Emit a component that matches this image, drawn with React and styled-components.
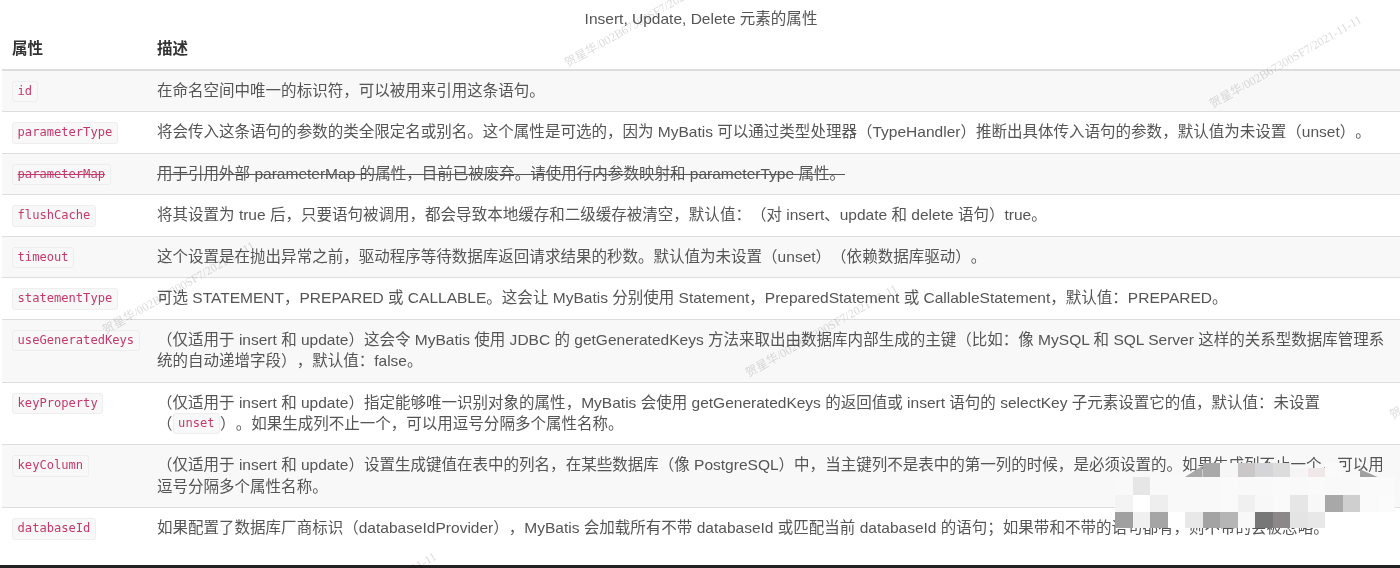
import React from 'react';
import styled, { createGlobalStyle } from 'styled-components';

const GlobalStyle = createGlobalStyle`
    html, body {
        margin: 0;
        padding: 0;
        background: #fff;
        overflow: hidden;
    }
`;

const SANS = '"Liberation Sans", "Noto Sans CJK SC", sans-serif';

const Page = styled.div`
    position: relative;
    display: flex;
    flex-direction: column;
    width: 1400px;
    height: 568px;
    overflow: hidden;
    background: #fff;
    color: #555;
    font-family: ${SANS};
    font-size: 15.52px;
    text-spacing-trim: space-all;
    filter: blur(0.45px);
`;

const Main = styled.main`
    flex: 1;
    padding: 0 0 0 2px;
`;

const Caption = styled.div`
    height: 31px;
    padding-top: 8.5px;
    box-sizing: border-box;
    text-align: center;
    line-height: 20px;
    color: #555;
`;

const Table = styled.table`
    width: 1398px;
    border-collapse: collapse;
    table-layout: fixed;
`;

const HeadCell = styled.th`
    height: 31px;
    padding: 0 10px 7px;
    text-align: left;
    font-weight: 700;
    color: #333;
    border-bottom: 2px solid #ddd;
`;

const Row = styled.tr`
    background: ${(p) => (p.$striped ? '#f8f8f8' : '#fff')};
    border-bottom: ${(p) => (p.$last ? 'none' : '1px solid #ddd')};
`;

const NameCell = styled.td`
    padding: 10px 10px 9.2px;
    vertical-align: top;
    line-height: 21.3px;
`;

const DescCell = styled.td`
    padding: 9px 10px 10.2px;
    vertical-align: top;
    line-height: 21.3px;
    text-decoration: ${(p) => (p.$deprecated ? 'line-through' : 'none')};
`;

const NoBreak = styled.span`
    white-space: nowrap;
`;

const Code = styled.code`
    display: inline-block;
    box-sizing: border-box;
    vertical-align: top;
    height: 21.3px;
    padding: 0 4.6px;
    line-height: 19.3px;
    font-family: "DejaVu Sans Mono", monospace;
    font-size: 12.1px;
    color: #c7386a;
    background: #f8f8f8;
    border: 1px solid #eee;
    border-radius: 3px;
    text-decoration: ${(p) => (p.$deprecated ? 'line-through' : 'none')};
`;

const BottomBar = styled.div`
    height: 3px;
    background: #222;
`;

const Watermark = styled.span`
    position: absolute;
    left: ${(p) => p.$x}px;
    top: ${(p) => p.$y}px;
    transform: translate(-50%, -50%) rotate(-30deg);
    font-family: "Liberation Serif", "Noto Sans CJK SC", serif;
    font-size: 12px;
    white-space: nowrap;
    color: rgba(0, 0, 0, 0.15);
    pointer-events: none;
`;

const Mosaic = styled.div`
    position: absolute;
    left: 1115px;
    top: 463px;
    display: grid;
    grid-template-columns: repeat(16, 17.5px);
    grid-template-rows: 14px 17.5px 17.5px 16px;
    filter: blur(0.5px);
`;

const Block = styled.i`
    display: block;
    background: ${(p) => p.$c};
    clip-path: ${(p) => p.$clip || 'none'};
`;

const T = 'transparent';
const MOSAIC = [
    [T, T, T, T, '#a8a8a8', '#a9a9a9', '#f6f6f6', '#c9c7c7', '#d5d5d8', '#dcdcdc', '#f5f5f5', '#f0e8e8', '#fafafa', T, '#a0a0a0', T],
    ['#f9f9f9', '#e6e6e6', '#f9f9f9', '#f9f9f9', '#f9f9f9', '#f9f9f9', '#fafafa', '#f9f9f9', '#f9f9f9', '#fafafa', '#f9f9f9', '#fafafa', '#f9f9f9', '#f9f9f9', '#fafafa', '#fafafa'],
    ['#f3f3f3', '#ffffff', '#eeeeee', '#f9f9f9', '#f9f9f9', '#f9f9f9', '#fafafa', '#f0f0f0', '#f8f8f8', '#fafafa', '#e6e6e6', '#f8f8f8', '#a8a8a8', '#cfcfcf', '#fafafa', '#fbfbfb'],
    ['#a0a0a0', '#f0f0f0', '#a5a5a5', '#ffffff', '#e8e8e8', '#a3a3a3', '#b5b5b5', '#f8f8f8', '#777777', '#8a8888', '#e4e4e4', '#e8e8e8', T, T, T, T],
];

// blocks of the top row that only partly hide the text under them
const CLIPS = {
    4: 'polygon(0 100%, 100% 20%, 100% 100%)',
    10: 'inset(35% 0 0 0)',
    11: 'inset(35% 0 0 0)',
    14: 'polygon(0 45%, 100% 100%, 0 100%)',
};

const WATERMARKS = [
    [1285, 61],
    [178, 287],
    [640, 20],
    [821, 330],
    [1465, 372],
    [360, 598],
];

const ROWS = [
    { name: 'id', desc: '在命名空间中唯一的标识符，可以被用来引用这条语句。' },
    { name: 'parameterType', desc: '将会传入这条语句的参数的类全限定名或别名。这个属性是可选的，因为 MyBatis 可以通过类型处理器（TypeHandler）推断出具体传入语句的参数，默认值为未设置（unset）。' },
    { name: 'parameterMap', desc: '用于引用外部 parameterMap 的属性，目前已被废弃。请使用行内参数映射和 parameterType 属性。', deprecated: true },
    { name: 'flushCache', desc: '将其设置为 true 后，只要语句被调用，都会导致本地缓存和二级缓存被清空，默认值：（对 insert、update 和 delete 语句）true。' },
    { name: 'timeout', desc: '这个设置是在抛出异常之前，驱动程序等待数据库返回请求结果的秒数。默认值为未设置（unset）（依赖数据库驱动）。' },
    { name: 'statementType', desc: '可选 STATEMENT，PREPARED 或 CALLABLE。这会让 MyBatis 分别使用 Statement，PreparedStatement 或 CallableStatement，默认值：PREPARED。' },
    { name: 'useGeneratedKeys', desc: '（仅适用于 insert 和 update）这会令 MyBatis 使用 JDBC 的 getGeneratedKeys 方法来取出由数据库内部生成的主键（比如：像 MySQL 和 SQL Server 这样的关系型数据库管理系统的自动递增字段），默认值：false。' },
    {
        name: 'keyProperty',
        desc: (
            <>
                （仅适用于 insert 和 update）指定能够唯一识别对象的属性，MyBatis 会使用 getGeneratedKeys 的返回值或 insert 语句的 selectKey 子元素设置它的值，默认值：未设置<NoBreak>（<Code>unset</Code>）</NoBreak>。如果生成列不止一个，可以用逗号分隔多个属性名称。
            </>
        ),
    },
    { name: 'keyColumn', desc: '（仅适用于 insert 和 update）设置生成键值在表中的列名，在某些数据库（像 PostgreSQL）中，当主键列不是表中的第一列的时候，是必须设置的。如果生成列不止一个，可以用逗号分隔多个属性名称。' },
    { name: 'databaseId', desc: '如果配置了数据库厂商标识（databaseIdProvider），MyBatis 会加载所有不带 databaseId 或匹配当前 databaseId 的语句；如果带和不带的语句都有，则不带的会被忽略。' },
];

const App = () => {
    return (
        <Page>
            <GlobalStyle />
            <Main>
                <Caption>Insert, Update, Delete 元素的属性</Caption>
                <Table>
                    <colgroup>
                        <col style={{ width: 145 }} />
                        <col />
                    </colgroup>
                    <thead>
                        <tr>
                            <HeadCell>属性</HeadCell>
                            <HeadCell>描述</HeadCell>
                        </tr>
                    </thead>
                    <tbody>
                        {ROWS.map((row, i) => (
                            <Row key={row.name} $striped={i % 2 === 0} $last={i === ROWS.length - 1}>
                                <NameCell>
                                    <Code $deprecated={row.deprecated}>{row.name}</Code>
                                </NameCell>
                                <DescCell $deprecated={row.deprecated}>{row.desc}</DescCell>
                            </Row>
                        ))}
                    </tbody>
                </Table>
            </Main>
            <BottomBar />
            {WATERMARKS.map(([x, y]) => (
                <Watermark key={x} $x={x} $y={y}>贺星华/002B67300SF7/2021-11-11</Watermark>
            ))}
            <Mosaic>
                {MOSAIC.flat().map((c, i) => (
                    <Block key={i} $c={c} $clip={CLIPS[i]} />
                ))}
            </Mosaic>
        </Page>
    );
};

export default App;
